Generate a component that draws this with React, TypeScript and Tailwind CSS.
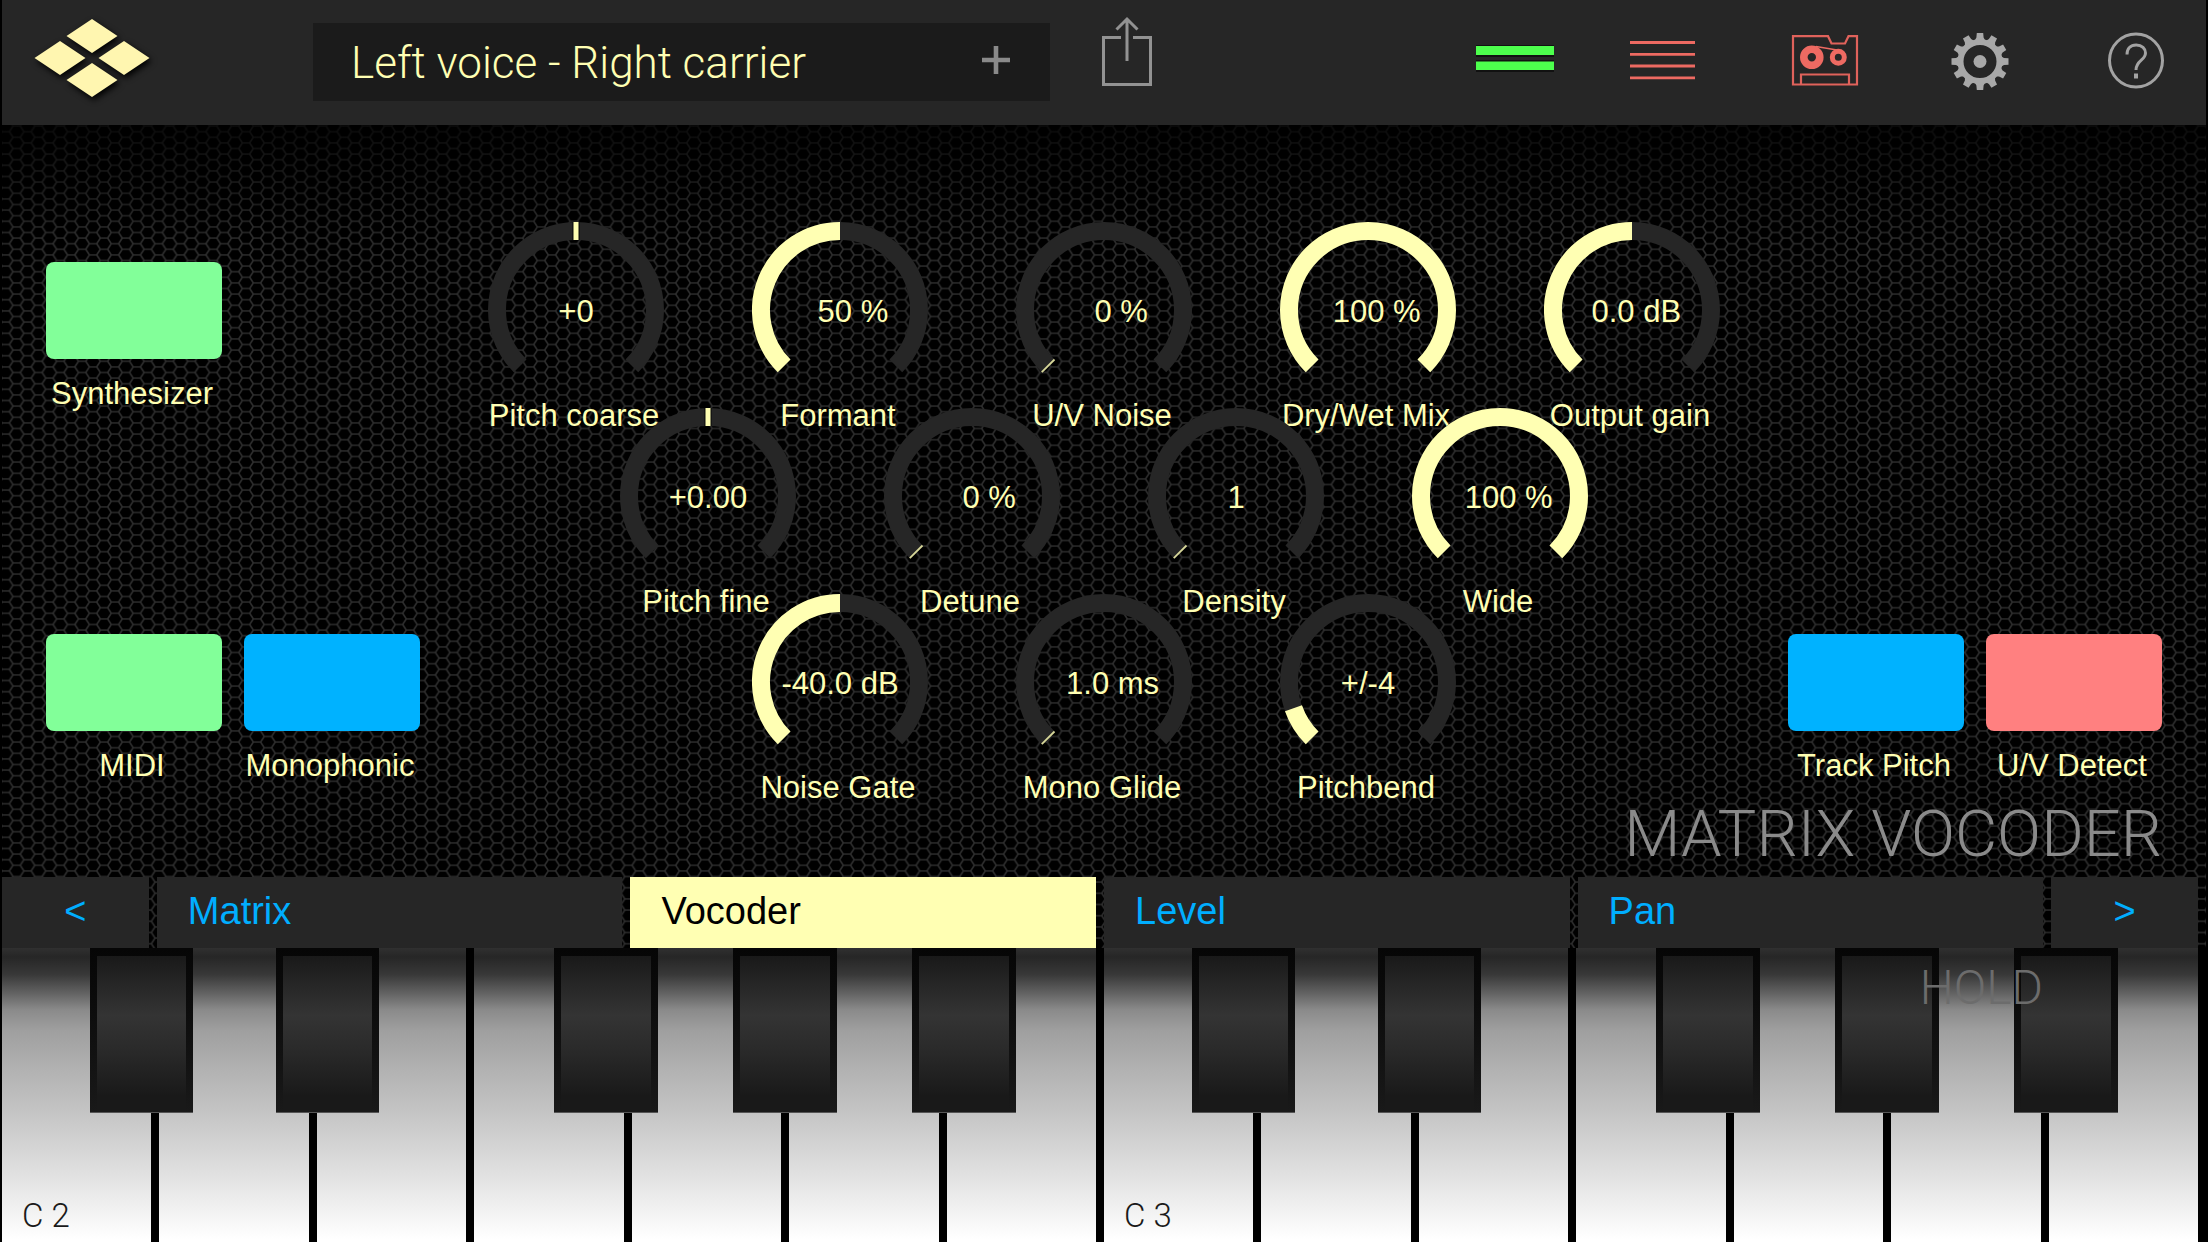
import { useState } from "react";
import type { ReactNode } from "react";
import clsx from "clsx";

interface KnobData {
  label: string;
  display: string;
  value: number;
  bipolar?: boolean;
}

// display values are padded the same way the synth formats them
const knobRows: KnobData[][] = [
  [
    { label: "Pitch coarse", display: "+0", value: 0.5, bipolar: true },
    { label: "Formant", display: "   50 %", value: 0.5 },
    { label: "U/V Noise", display: "    0 %", value: 0 },
    { label: "Dry/Wet Mix", display: "  100 %", value: 1 },
    { label: "Output gain", display: " 0.0 dB", value: 0.5 },
  ],
  [
    { label: "Pitch fine", display: "+0.00", value: 0.5, bipolar: true },
    { label: "Detune", display: "    0 %", value: 0 },
    { label: "Density", display: "1", value: 0 },
    { label: "Wide", display: "  100 %", value: 1 },
  ],
  [
    { label: "Noise Gate", display: "-40.0 dB", value: 0.5 },
    { label: "Mono Glide", display: "  1.0 ms", value: 0 },
    { label: "Pitchbend", display: "+/-4", value: 0.095 },
  ],
];

const tabs = ["Matrix", "Vocoder", "Level", "Pan"];

const blackKeys = [
  { note: "C#", position: "left-[8%]" },
  { note: "D#", position: "left-[25%]" },
  { note: "F#", position: "left-[50.5%]" },
  { note: "G#", position: "left-[66.8%]" },
  { note: "A#", position: "left-[83.2%]" },
];

const point = (angle: number, r: number) => {
  const rad = (angle * Math.PI) / 180;
  return `${88 + r * Math.sin(rad)} ${88 - r * Math.cos(rad)}`;
};

const arc = (from: number, to: number) =>
  `M${point(from, 79)}A79 79 0 ${to - from > 180 ? 1 : 0} 1 ${point(to, 79)}`;

const Knob = ({ label, display, value, bipolar }: KnobData) => {
  const end = -135 + value * 270;
  return (
    <label className="flex w-44 flex-col items-center">
      <span className="relative flex h-44 w-44 items-center justify-center">
        <svg viewBox="0 0 176 176" fill="none" className="absolute inset-0 h-full w-full">
          <path d={arc(-135, 135)} stroke="#262626" strokeWidth="18" />
          {bipolar && <path d="M88 0V18" stroke="#111" strokeWidth="7.5" />}
          {bipolar && <path d="M88 0V18" stroke="#ffffb3" strokeWidth="5" />}
          {!bipolar && value > 0 && <path d={arc(-135, end)} stroke="#ffffb3" strokeWidth="18" />}
          {!bipolar && value === 0 && (
            <path d={`M${point(-135, 70)}L${point(-135, 88)}`} stroke="#d8d89a" strokeWidth="1.8" />
          )}
        </svg>
        <span className="relative whitespace-pre pt-1">{display}</span>
        <input
          type="range"
          min={0}
          max={1}
          step={0.001}
          defaultValue={value}
          className="absolute inset-0 h-full w-full cursor-pointer opacity-0"
        />
      </span>
      <span className="whitespace-nowrap pr-1">{label}</span>
    </label>
  );
};

const Toggle = ({ id, label, color }: { id: string; label: string; color: string }) => (
  <div className="flex w-44 flex-col items-center gap-[17px]">
    <button id={id} type="button" className={clsx("h-[97px] w-full rounded-lg", color)} />
    <label htmlFor={id} className="whitespace-nowrap pr-1">
      {label}
    </label>
  </div>
);

const IconButton = ({ label, children }: { label: string; children: ReactNode }) => (
  <button type="button" aria-label={label} className="block h-20 w-20 shrink-0">
    <svg viewBox="0 0 80 80" fill="none" className="h-full w-full overflow-visible">
      {children}
    </svg>
  </button>
);

const Logo = () => (
  <svg viewBox="0 0 116 80" className="h-20 w-[116px] shrink-0 overflow-visible drop-shadow-[2px_3px_3px_#000000]">
    {["58,14", "26,36", "90,36", "58,58"].map((c) => (
      <path key={c} d="M-25.5 0L0 -17L25.5 0L0 17Z" transform={`translate(${c})`} fill="#fff6b0" />
    ))}
  </svg>
);

const Header = () => (
  <header className="flex items-center bg-[#262626] pt-[22px] pr-[30px] pb-[23px] pl-8">
    <Logo />
    <div className="ml-[163px] flex h-[78px] w-[34.4%] items-center bg-[#1b1b1b] pr-[14px] pl-[38px]">
      <button
        type="button"
        className="flex-1 whitespace-nowrap pt-0.5 text-left font-['Roboto',sans-serif] text-[44px] leading-[48px] font-light text-[#ffffb3]"
      >
        Left voice - Right carrier
      </button>
      <IconButton label="Save preset">
        <path d="M40 24V52M26 38H54" stroke="#8a8a8a" strokeWidth="4.6" />
      </IconButton>
    </div>
    <div className="ml-[37px]">
      <IconButton label="Share">
        <path d="M34 15.5H16.5V62.5H63.5V15.5H46" stroke="#929292" strokeWidth="3" />
        <path d="M40 39V-3M29.5 7.5L40 -3L50.5 7.5" stroke="#929292" strokeWidth="3" />
      </IconButton>
    </div>
    <nav className="ml-auto flex gap-[76px]">
      <IconButton label="Input level">
        <path d="M4 23H82V35H4ZM4 38H82V50H4Z" fill="#111" />
        <path d="M4 24H82V33H4ZM4 39.5H82V48H4Z" fill="#4dff4d" />
      </IconButton>
      <IconButton label="Routing">
        <path d="M2 20.5H67M2 32.3H67M2 44H67M2 55.8H67" stroke="#ee6a62" strokeWidth="2.8" />
      </IconButton>
      <IconButton label="Recorder">
        <path d="M9 14.2H44L47.5 21.5H61L64.5 14.2H73V62.5H9Z" stroke="#e0625b" strokeWidth="2.2" />
        <path d="M17 62V52.5H65V62" stroke="#e0625b" strokeWidth="2.2" />
        <circle cx="27.8" cy="35.3" r="8" stroke="#ee6a62" strokeWidth="7.6" />
        <circle cx="54.3" cy="35.3" r="6" stroke="#ee6a62" strokeWidth="5" />
        <path d="M32 24.5L56 28.5" stroke="#ee6a62" strokeWidth="1.6" />
      </IconButton>
      <IconButton label="Settings">
        <circle cx="40" cy="39.5" r="19.5" stroke="#a8a8a8" strokeWidth="6" />
        <circle cx="40" cy="39.5" r="6.5" fill="#a8a8a8" />
        {Array.from({ length: 12 }, (_, i) => (
          <path
            key={i}
            d="M-5.2 -21L-3.6 -24L-3.2 -28.5H3.2L3.6 -24L5.2 -21Z"
            transform={`translate(40 39.5) rotate(${i * 30})`}
            fill="#a8a8a8"
          />
        ))}
      </IconButton>
      <IconButton label="Help">
        <circle cx="40" cy="38.5" r="26.5" stroke="#a3a3a3" strokeWidth="3" />
        <path
          d="M31 32.5C31 26.5 34.5 23 40.2 23C46 23 49.5 26.5 49.5 31C49.5 38.5 40 38 40 48"
          stroke="#a3a3a3"
          strokeWidth="3"
        />
        <path d="M40 51.5V56.5" stroke="#a3a3a3" strokeWidth="4" />
      </IconButton>
    </nav>
  </header>
);

const Mesh = () => (
  <svg className="absolute inset-0 h-full w-full" aria-hidden="true">
    <defs>
      <pattern id="mesh" width="21.85" height="11.2" patternUnits="userSpaceOnUse" patternTransform="translate(3.7 1.1)">
        <path
          d="M0 5.6H3.64L7.28 0H14.57L18.2 5.6L14.57 11.2H7.28L3.64 5.6M18.2 5.6H21.85"
          fill="none"
          stroke="#2e2e2e"
          strokeWidth="1.6"
        />
      </pattern>
      <linearGradient id="mesh-fade" x1="0" y1="0" x2="0" y2="1">
        <stop offset="0" stopColor="#000" stopOpacity="0.75" />
        <stop offset="0.14" stopColor="#000" stopOpacity="0" />
      </linearGradient>
    </defs>
    <rect width="100%" height="100%" fill="url(#mesh)" />
    <rect width="100%" height="100%" fill="url(#mesh-fade)" />
  </svg>
);

const Tabs = () => {
  const [active, setActive] = useState("Vocoder");
  return (
    <nav className="relative grid grid-cols-[147fr_466fr_466fr_466fr_466fr_147fr] gap-2 pr-2 text-[38px] leading-[42px] text-[#00aeff]">
      <button type="button" className="bg-[#262626] pt-[13px] pb-4">
        &lt;
      </button>
      {tabs.map((tab) => (
        <button
          key={tab}
          type="button"
          onClick={() => setActive(tab)}
          className={clsx(
            "pt-[13px] pb-4 pl-[31px] text-left",
            tab === active ? "bg-[#ffffb3] text-black" : "bg-[#262626]"
          )}
        >
          {tab}
        </button>
      ))}
      <button type="button" className="bg-[#262626] pt-[13px] pb-4">
        &gt;
      </button>
    </nav>
  );
};

const Octave = ({ number }: { number: number }) => (
  <div className="relative flex flex-1 gap-2">
    {["C", "D", "E", "F", "G", "A", "B"].map((note) => (
      <button
        key={note}
        type="button"
        aria-label={`${note} ${number}`}
        className="relative flex-1 bg-[linear-gradient(#303030_0%,#262626_3%,#383838_9%,#606060_15%,#8a8a8a_21%,#9f9f9f_28%,#b0b0b0_40%,#c6c6c6_57%,#dedede_75%,#f0f0f0_88%,#ffffff_99%)]"
      >
        {note === "C" && (
          <span className="absolute bottom-2 left-5 font-['Roboto',sans-serif] text-[33px] leading-9 font-light text-[#1a1a1a]">
            C {number}
          </span>
        )}
      </button>
    ))}
    {blackKeys.map(({ note, position }) => (
      <button
        key={note}
        type="button"
        aria-label={`${note} ${number}`}
        className={clsx(
          "absolute top-0 flex h-[56%] w-[9.5%] border-b border-[#555] bg-linear-to-b from-[#060606] to-[#191919] px-[7px] pt-2",
          position
        )}
      >
        <span className="h-full flex-1 bg-[linear-gradient(#191919_0%,#262626_18%,#343434_38%,#2a2a2a_60%,#191919_90%)]" />
      </button>
    ))}
  </div>
);

const Keyboard = () => (
  <div className="relative flex min-h-[294px] flex-1 gap-2 pr-2">
    <Octave number={2} />
    <Octave number={3} />
    <button
      type="button"
      className="absolute top-3 right-[163px] font-['Roboto',sans-serif] text-[48px] leading-[56px] font-light text-[#6c6c6c]"
    >
      HOLD
    </button>
  </div>
);

export default function App() {
  return (
    <div className="flex min-h-screen flex-col bg-black px-0.5 font-['Liberation_Sans',Arial,sans-serif]">
      <Header />
      <div className="relative">
        <Mesh />
        <main className="relative px-11 pt-[97px] pb-[15px] text-[31px] leading-9 text-[#ffffb3]">
          <div className="grid grid-cols-[1fr_auto_1fr]">
            <div className="flex flex-col justify-between pt-10 pb-[22px]">
              <Toggle id="synthesizer" label="Synthesizer" color="bg-[#82ff99]" />
              <div className="flex gap-[22px]">
                <Toggle id="midi" label="MIDI" color="bg-[#82ff99]" />
                <Toggle id="monophonic" label="Monophonic" color="bg-[#00b2ff]" />
              </div>
            </div>
            <div className="flex flex-col items-center pb-[26px]">
              {knobRows.map((row, index) => (
                <div key={index} className="-mb-[26px] flex gap-[88px]">
                  {row.map((knob) => (
                    <Knob key={knob.label} {...knob} />
                  ))}
                </div>
              ))}
            </div>
            <div className="flex items-end justify-end gap-[22px] pb-[22px]">
              <Toggle id="track-pitch" label="Track Pitch" color="bg-[#00b2ff]" />
              <Toggle id="uv-detect" label="U/V Detect" color="bg-[#ff8080]" />
            </div>
          </div>
          <h1 className="text-right font-['Roboto',sans-serif] text-[65px] leading-[56px] font-light text-[#8a8a8a]">
            MATRIX VOCODER
          </h1>
        </main>
        <Tabs />
      </div>
      <Keyboard />
    </div>
  );
}
